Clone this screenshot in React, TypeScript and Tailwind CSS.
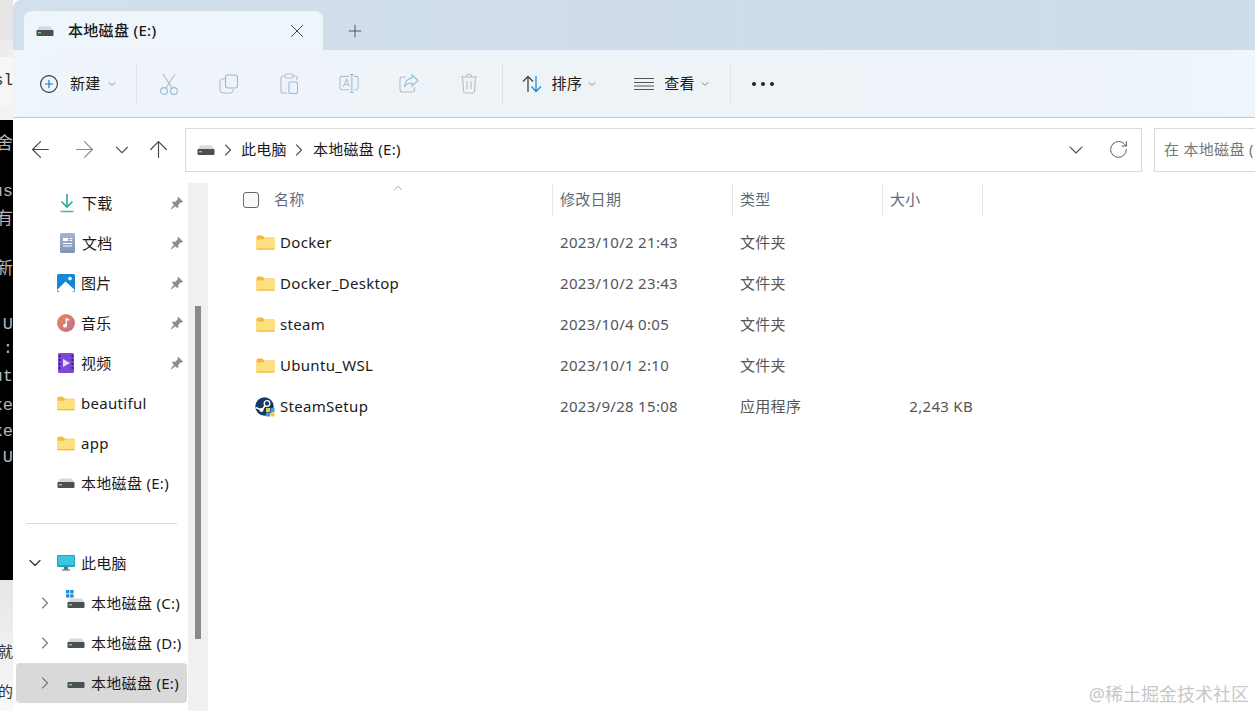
import React from 'react';
import { X, Plus, ChevronDown, ChevronRight, ChevronUp, ArrowLeft, ArrowRight, ArrowUp, RotateCw } from 'lucide-react';

const DriveIcon = () => (
  <svg width="18" height="12" viewBox="0 0 18 12">
    <path d="M3 1.5 H15 L17.5 6 H0.5 Z" fill="#d6d8da" />
    <rect x="0.5" y="5" width="17" height="6" rx="1" fill="#4b4f52" />
    <rect x="2" y="7" width="3" height="1.4" fill="#7fd08c" />
  </svg>
);

const FolderIcon = () => (
  <svg width="19" height="15" viewBox="0 0 19 15">
    <path d="M0.5 2 Q0.5 0.5 2 0.5 H6 L8.5 2.5 H18.5 V13.5 Q18.5 14.5 17.5 14.5 H1.5 Q0.5 14.5 0.5 13.5 Z" fill="#f4b93c" />
    <path d="M0.5 4.5 L7 4.5 L9 3 H18.5 V13.5 Q18.5 14.5 17.5 14.5 H1.5 Q0.5 14.5 0.5 13.5 Z" fill="#fddf7e" />
    <rect x="0.5" y="13.4" width="18" height="1.1" fill="#f1bb41" />
  </svg>
);

const PinIcon = () => (
  <svg width="14" height="14" viewBox="0 0 14 14" fill="#8d8d8d">
    <path d="M8.2 0.8 L13.2 5.8 L12 6.6 L10.8 6.2 L8.3 8.7 L8.4 11 L7.2 12 L2 6.8 L3 5.6 L5.3 5.7 L7.8 3.2 L7.4 2 Z" />
    <path d="M4 8.4 L5.6 10 L1 13.4 L0.6 13 Z" />
  </svg>
);

const DownloadIcon = () => (
  <svg width="16" height="20" viewBox="0 0 16 20" fill="none" stroke="#26ad94" strokeWidth="1.6">
    <path d="M8 1 V13.5" />
    <path d="M2.5 8.5 L8 14 L13.5 8.5" />
    <path d="M1.5 18.5 H14.5" stroke="#4bb8a5" />
  </svg>
);

const DocIcon = () => (
  <svg width="15" height="20" viewBox="0 0 15 20">
    <defs>
      <linearGradient id="docg" x1="0" y1="0" x2="0" y2="1">
        <stop offset="0" stopColor="#a5b5ce" />
        <stop offset="1" stopColor="#7f95b6" />
      </linearGradient>
    </defs>
    <rect width="15" height="20" rx="1.5" fill="url(#docg)" />
    <path d="M3 5 H8 V8 H3 Z M9.5 5 H12 V6 H9.5 Z M9.5 7 H12 V8 H9.5 Z M3 10 H12 V11 H3 Z M3 12.5 H12 V13.5 H3 Z" fill="#fff" />
  </svg>
);

const PictureIcon = () => (
  <svg width="18" height="18" viewBox="0 0 18 18">
    <rect width="18" height="18" rx="1.5" fill="#1487d8" />
    <circle cx="13" cy="4.6" r="1.8" fill="#fff" />
    <path d="M0 16 L8.5 7.5 L18 16 V16.5 Q18 18 16.5 18 H1.5 Q0 18 0 16.5 Z" fill="#fff" />
    <path d="M0 16 L3 18 H15 L18 16 V16.5 Q18 18 16.5 18 H1.5 Q0 18 0 16.5 Z" fill="#1fa0e6" />
  </svg>
);

const MusicIcon = () => (
  <svg width="20" height="20" viewBox="0 0 20 20">
    <defs>
      <linearGradient id="musg" x1="0" y1="0" x2="1" y2="1">
        <stop offset="0" stopColor="#e88a52" />
        <stop offset="1" stopColor="#c36b96" />
      </linearGradient>
    </defs>
    <circle cx="10" cy="10" r="10" fill="url(#musg)" />
    <path d="M9.5 4.5 L13.5 5.5 V7.5 L11 7 V13 A2.2 2 0 1 1 9.5 11.2 Z" fill="#fff" />
  </svg>
);

const VideoIcon = () => (
  <svg width="16" height="20" viewBox="0 0 16 20">
    <rect width="16" height="20" rx="1.5" fill="#7e49d8" />
    <path d="M1 2 H2.5 V4 H1 Z M1 6 H2.5 V8 H1 Z M1 10 H2.5 V12 H1 Z M1 14 H2.5 V16 H1 Z M13.5 2 H15 V4 H13.5 Z M13.5 6 H15 V8 H13.5 Z M13.5 10 H15 V12 H13.5 Z M13.5 14 H15 V16 H13.5 Z" fill="#2f1a75" />
    <path d="M5 6 L12 10 L5 14 Z" fill="#e6dcfb" />
  </svg>
);

const PcIcon = () => (
  <svg width="18" height="16" viewBox="0 0 18 16">
    <rect width="18" height="12" rx="1" fill="#1fa3c7" />
    <rect x="1" y="1" width="16" height="9" fill="#3fc5dd" />
    <path d="M7 12 H11 V14.5 H7 Z" fill="#54707c" />
    <rect x="5" y="14.5" width="8" height="1" fill="#3d5560" />
  </svg>
);

const SteamIcon = () => (
  <svg width="20" height="20" viewBox="0 0 20 20">
    <circle cx="9.5" cy="9.5" r="9.2" fill="#143a63" />
    <circle cx="12" cy="6.5" r="2.8" fill="none" stroke="#fff" strokeWidth="1.3" />
    <path d="M0.6 10.5 L7 13.2 L10 8.5" fill="none" stroke="#fff" strokeWidth="1.6" />
    <circle cx="6.5" cy="13" r="2" fill="#fff" />
    <rect x="11" y="11" width="4" height="4" fill="#f2c83b" />
    <rect x="15.5" y="11" width="4" height="4" fill="#3c9bdc" />
    <rect x="11" y="15.5" width="4" height="4" fill="#3c9bdc" />
    <rect x="15.5" y="15.5" width="4" height="4" fill="#f2c83b" />
  </svg>
);

const CutIcon = () => (
  <svg width="20" height="22" viewBox="0 0 20 22" fill="none" stroke="#b4bcc4" strokeWidth="1.1">
    <path d="M4 1 L13 15" />
    <path d="M16 1 L7 15" />
    <circle cx="5" cy="18" r="3.4" stroke="#8fbcdc" />
    <circle cx="15" cy="18" r="3.4" stroke="#8fbcdc" />
  </svg>
);

const CopyIcon = () => (
  <svg width="20" height="20" viewBox="0 0 20 20" fill="none" strokeWidth="1.1">
    <rect x="6.5" y="1" width="12" height="13" rx="2.5" stroke="#8fbcdc" />
    <path d="M6 4.5 Q1 5 1 8 V15 Q1 19 5 19 H11 Q14 19 14.5 15" stroke="#b4bcc4" />
  </svg>
);

const PasteIcon = () => (
  <svg width="18" height="21" viewBox="0 0 18 21" fill="none" strokeWidth="1.1">
    <path d="M5 3 H3 Q1 3 1 5 V18 Q1 20 3 20 H7" stroke="#b4bcc4" />
    <path d="M13 3 H15 Q17 3 17 5 V7" stroke="#b4bcc4" />
    <rect x="5" y="1" width="8" height="4" rx="1.5" stroke="#b4bcc4" />
    <rect x="9" y="9" width="8.5" height="11.5" rx="1.5" stroke="#8fbcdc" />
  </svg>
);

const RenameIcon = () => (
  <svg width="21" height="21" viewBox="0 0 21 21" fill="none" strokeWidth="1.1">
    <path d="M11 3 H3 Q1 3 1 5 V15 Q1 17 3 17 H11" stroke="#b4bcc4" />
    <path d="M16 3 H18 Q20 3 20 5 V15 Q20 17 18 17 H16" stroke="#b4bcc4" />
    <path d="M4.5 14 L8 6 L11 14 M5.5 11.5 H10" stroke="#b4bcc4" />
    <path d="M13.5 1 V20 M11.5 1 H15.5 M11.5 20 H15.5" stroke="#8fbcdc" />
  </svg>
);

const ShareIcon = () => (
  <svg width="20" height="19" viewBox="0 0 20 19" fill="none" strokeWidth="1.1">
    <path d="M7 3 H3.5 Q1 3 1 5.5 V15.5 Q1 18 3.5 18 H13 Q15.5 18 15.5 15.5 V13" stroke="#b4bcc4" />
    <path d="M13 1 L19 6.5 L13 12 V9 Q8 8.5 5.5 13 Q6 5 13 4 Z" stroke="#8fbcdc" />
  </svg>
);

const TrashIcon = () => (
  <svg width="18" height="21" viewBox="0 0 18 21" fill="none" stroke="#b7bdc3" strokeWidth="1.1">
    <path d="M1 4 H17" />
    <path d="M6.5 4 Q6.5 1 9 1 Q11.5 1 11.5 4" />
    <path d="M2.5 4 L3.5 18 Q3.7 20 5.5 20 H12.5 Q14.3 20 14.5 18 L15.5 4" />
    <path d="M7 8 V16 M11 8 V16" />
  </svg>
);

const Divider = ({ cls }: { cls: string }) => <div className={`w-px h-[39px] bg-[#dde2e7] ${cls}`} />;

const sideItems: { icon: React.ReactNode; label: string; pin?: boolean; px: string }[] = [
  { icon: <DownloadIcon />, label: '下载', pin: true, px: 'ml-[1px]' },
  { icon: <DocIcon />, label: '文档', pin: true, px: 'ml-[1px]' },
  { icon: <PictureIcon />, label: '图片', pin: true, px: '' },
  { icon: <MusicIcon />, label: '音乐', pin: true, px: '' },
  { icon: <VideoIcon />, label: '视频', pin: true, px: '' },
  { icon: <FolderIcon />, label: 'beautiful', px: '' },
  { icon: <FolderIcon />, label: 'app', px: '' },
  { icon: <DriveIcon />, label: '本地磁盘 (E:)', px: '' },
];

const drives = [
  { label: '本地磁盘 (C:)', win: true, selected: false },
  { label: '本地磁盘 (D:)', win: false, selected: false },
  { label: '本地磁盘 (E:)', win: false, selected: true },
];

const files = [
  { name: 'Docker', date: '2023/10/2 21:43', type: '文件夹', size: '' },
  { name: 'Docker_Desktop', date: '2023/10/2 23:43', type: '文件夹', size: '' },
  { name: 'steam', date: '2023/10/4 0:05', type: '文件夹', size: '' },
  { name: 'Ubuntu_WSL', date: '2023/10/1 2:10', type: '文件夹', size: '' },
  { name: 'SteamSetup', date: '2023/9/28 15:08', type: '应用程序', size: '2,243 KB' },
];

const termLines = [
  { h: 'h-[12px]', t: '' },
  { h: 'h-[26px]', t: '舍' },
  { h: 'h-[22px]', t: '' },
  { h: 'h-[24px]', t: 'us' },
  { h: 'h-[32px]', t: '有' },
  { h: 'h-[22px]', t: '' },
  { h: 'h-[24px]', t: '新' },
  { h: 'h-[31px]', t: '' },
  { h: 'h-[24px]', t: ',U' },
  { h: 'h-[24px]', t: ':' },
  { h: 'h-[32px]', t: 'ut' },
  { h: 'h-[25px]', t: 'xe' },
  { h: 'h-[28px]', t: 'xe' },
  { h: 'h-[24px]', t: ',U' },
];

export default function App() {
  return (
    <div className="relative flex h-[711px] w-[1255px] overflow-hidden bg-white font-['Noto_Sans','Noto_Sans_CJK_SC',sans-serif] text-[15px] tracking-[0.3px] text-[#1a1a1a]">
      {/* other windows peeking out on the left */}
      <div className="flex w-[13px] shrink-0 flex-col overflow-hidden font-['Liberation_Mono','Noto_Sans_CJK_SC',monospace] tracking-normal">
        <div className="h-[40px] shrink-0 bg-[#e6e6e6]" />
        <div className="h-[17px] shrink-0 bg-[#ededed]" />
        <div className="flex h-[48px] shrink-0 items-center justify-end bg-[#f7f7f7] text-[16px] text-[#333]">sl</div>
        <div className="h-[15px] shrink-0 bg-[#f2f2f2]" />
        <div className="h-[460px] shrink-0 bg-black text-[17px] text-[#b5b5b5]">
          {termLines.map((l, i) => (
            <div key={i} className={`flex items-center justify-end whitespace-nowrap ${l.h}`}>{l.t}</div>
          ))}
        </div>
        <div className="flex flex-1 flex-col bg-gradient-to-b from-[#e6e6e6] to-[#f8f8f8] text-[15px] text-[#333]">
          <div className="h-[60px] shrink-0" />
          <div className="flex h-[28px] items-center justify-end whitespace-nowrap">就</div>
          <div className="h-[12px] shrink-0" />
          <div className="flex h-[28px] items-center justify-end whitespace-nowrap">的</div>
        </div>
      </div>

      {/* explorer window */}
      <div className="flex min-w-0 flex-1 flex-col overflow-hidden rounded-tl-lg bg-white">
        {/* tab strip */}
        <div className="flex h-[50px] shrink-0 items-end bg-gradient-to-r from-[#d2dfec] via-[#d0dceb] to-[#ccdee9] pl-[11px]">
          <div className="flex h-[39px] w-[299px] items-center rounded-t-lg bg-[#eef5fb] pl-[12px]">
            <DriveIcon />
            <span className="ml-[14px] font-medium">本地磁盘 (E:)</span>
            <X className="ml-auto mr-[15px] text-[#333]" size={22} strokeWidth={1} />
          </div>
          <div className="ml-[22px] flex h-[39px] items-center">
            <Plus className="text-[#555]" size={20} strokeWidth={1.2} />
          </div>
        </div>

        {/* command bar */}
        <div className="flex h-[68px] shrink-0 items-center border-b border-[#c4c9ce] bg-gradient-to-r from-[#eef5fb] via-[#eef3f7] to-[#eef5fc] pl-[27px]">
          <svg width="18" height="18" viewBox="0 0 18 18" fill="none">
            <circle cx="9" cy="9" r="8.4" stroke="#333" strokeWidth="1.1" />
            <path d="M9 5 V13 M5 9 H13" stroke="#1677c9" strokeWidth="1.2" />
          </svg>
          <span className="ml-[12px]">新建</span>
          <ChevronDown className="ml-[5px] text-[#666]" size={12} strokeWidth={1.5} />
          <Divider cls="ml-[18px]" />
          <div className="ml-[22px] flex w-[20px] justify-center"><CutIcon /></div>
          <div className="ml-[40px] flex w-[20px] justify-center"><CopyIcon /></div>
          <div className="ml-[40px] flex w-[20px] justify-center"><PasteIcon /></div>
          <div className="ml-[40px] flex w-[20px] justify-center"><RenameIcon /></div>
          <div className="ml-[40px] flex w-[20px] justify-center"><ShareIcon /></div>
          <div className="ml-[40px] flex w-[20px] justify-center"><TrashIcon /></div>
          <Divider cls="ml-[23px]" />
          <svg className="ml-[19px]" width="20" height="18" viewBox="0 0 20 18" fill="none" strokeWidth="1.3">
            <path d="M6 17 V1.5 M1 6.5 L6 1.5 L11 6.5" stroke="#444" />
            <path d="M14 1 V16.5 M9.5 11.5 L14 16.5 L19 11.5" stroke="#1a8ad8" />
          </svg>
          <span className="ml-[10px]">排序</span>
          <ChevronDown className="ml-[4px] text-[#666]" size={12} strokeWidth={1.5} />
          <svg className="ml-[36px]" width="20" height="14" viewBox="0 0 20 14" stroke="#555" strokeWidth="1.2">
            <path d="M0 1.5 H20 M0 5.5 H20 M0 9 H20 M0 12.5 H20" />
          </svg>
          <span className="ml-[10px]">查看</span>
          <ChevronDown className="ml-[4px] text-[#666]" size={12} strokeWidth={1.5} />
          <Divider cls="ml-[19px]" />
          <div className="ml-[21px] flex gap-[5px]">
            <span className="h-[4px] w-[4px] rounded-full bg-[#222]" />
            <span className="h-[4px] w-[4px] rounded-full bg-[#222]" />
            <span className="h-[4px] w-[4px] rounded-full bg-[#222]" />
          </div>
        </div>

        {/* address row */}
        <div className="flex h-[65px] shrink-0 items-center pb-[2px]">
          <ArrowLeft className="ml-[14px] text-[#444]" size={27} strokeWidth={1} />
          <ArrowRight className="ml-[17px] text-[#888]" size={27} strokeWidth={1} />
          <ChevronDown className="ml-[13px] text-[#555]" size={22} strokeWidth={1.2} />
          <ArrowUp className="ml-[12px] text-[#444]" size={27} strokeWidth={1} />
          <div className="ml-[13px] flex h-[44px] w-[957px] shrink-0 items-center border border-[#d9d9d9] pl-[11px]">
            <DriveIcon />
            <ChevronRight className="ml-[3px] text-[#555]" size={20} strokeWidth={1.3} />
            <span className="ml-[3px]">此电脑</span>
            <ChevronRight className="ml-[2px] text-[#555]" size={20} strokeWidth={1.3} />
            <span className="ml-[4px]">本地磁盘 (E:)</span>
            <ChevronDown className="ml-auto text-[#555]" size={24} strokeWidth={1.1} />
            <RotateCw className="ml-[20px] mr-[12px] text-[#555]" size={21} strokeWidth={1.1} />
          </div>
          <div className="ml-[12px] flex h-[44px] flex-1 items-center overflow-hidden whitespace-nowrap border border-r-0 border-[#d9d9d9] pl-[9px] text-[#777]">
            在 本地磁盘 (E:) 中搜索
          </div>
        </div>

        {/* body */}
        <div className="flex min-h-0 flex-1">
          {/* nav pane */}
          <div className="w-[175px] shrink-0 overflow-hidden">
            {sideItems.map(item => (
              <div key={item.label} className="flex h-[40px] items-center pl-[44px]">
                <div className={`flex w-[18px] shrink-0 justify-center ${item.px}`}>{item.icon}</div>
                <span className="ml-[6px] whitespace-nowrap">{item.label}</span>
                {item.pin && <span className="ml-auto mr-[4px]"><PinIcon /></span>}
              </div>
            ))}
            <div className="flex h-[40px] items-center">
              <div className="ml-[13px] h-px w-[151px] bg-[#d9d9d9]" />
            </div>
            <div className="flex h-[40px] items-center">
              <ChevronDown className="ml-[12px] text-[#333]" size={20} strokeWidth={1.5} />
              <div className="ml-[11px] flex w-[20px] justify-center"><PcIcon /></div>
              <span className="ml-[5px]">此电脑</span>
            </div>
            {drives.map(d => (
              <div key={d.label} className={`ml-[3px] mr-[1px] flex h-[40px] items-center rounded ${d.selected ? 'bg-[#d9d9d9]' : ''}`}>
                <ChevronRight className="ml-[19px] text-[#777]" size={20} strokeWidth={1.3} />
                <div className="relative ml-[12px] flex w-[18px] justify-center">
                  {d.win && (
                    <svg className="absolute -left-[1px] -top-[7px]" width="8" height="8" viewBox="0 0 8 8" fill="#1f8fdc">
                      <rect width="3.4" height="3.4" /><rect x="4.2" width="3.4" height="3.4" />
                      <rect y="4.2" width="3.4" height="3.4" /><rect x="4.2" y="4.2" width="3.4" height="3.4" />
                    </svg>
                  )}
                  <DriveIcon />
                </div>
                <span className="ml-[6px] whitespace-nowrap">{d.label}</span>
              </div>
            ))}
          </div>

          {/* nav scrollbar */}
          <div className="w-[20px] shrink-0 bg-[#f0f0f0] pl-[7px] pt-[123px]">
            <div className="h-[333px] w-[6px] bg-[#8a8a8a]" />
          </div>

          {/* file list */}
          <div className="min-w-0 flex-1">
            <div className="relative mt-[1px] flex h-[32px] items-center text-[#5d6b7a]">
              <ChevronUp className="absolute left-[183px] -top-[3px] text-[#777]" size={14} strokeWidth={1.1} />
              <div className="flex h-full w-[345px] shrink-0 items-center border-r border-[#e5e5e5] pb-[1px] pl-[35px]">
                <span className="h-[16px] w-[16px] rounded-[3px] border border-[#666] bg-[#f8f8f8]" />
                <span className="ml-[15px]">名称</span>
              </div>
              <div className="flex h-full w-[180px] shrink-0 items-center border-r border-[#e5e5e5] pb-[2px] pl-[7px]">修改日期</div>
              <div className="flex h-full w-[150px] shrink-0 items-center border-r border-[#e5e5e5] pb-[2px] pl-[7px]">类型</div>
              <div className="flex h-full w-[100px] shrink-0 items-center border-r border-[#e5e5e5] pb-[2px] pl-[7px]">大小</div>
            </div>
            <div className="pt-[6px]">
              {files.map((f, i) => (
                <div key={f.name} className="flex h-[41px] items-center">
                  <div className="flex w-[344px] shrink-0 items-center pl-[47px]">
                    <div className="flex w-[20px] justify-center">{i === 4 ? <SteamIcon /> : <FolderIcon />}</div>
                    <span className="ml-[5px]">{f.name}</span>
                  </div>
                  <div className="w-[180px] shrink-0 pl-[8px] text-[#555]">{f.date}</div>
                  <div className="w-[150px] shrink-0 pl-[8px] text-[#555]">{f.type}</div>
                  <div className="w-[91px] shrink-0 text-right text-[#555]">{f.size}</div>
                </div>
              ))}
            </div>
          </div>
        </div>
      </div>

      <div className="absolute bottom-[6px] right-[6px] whitespace-nowrap text-[18px] leading-[22px] tracking-normal text-[#c8c8c8]">@稀土掘金技术社区</div>
    </div>
  );
}
